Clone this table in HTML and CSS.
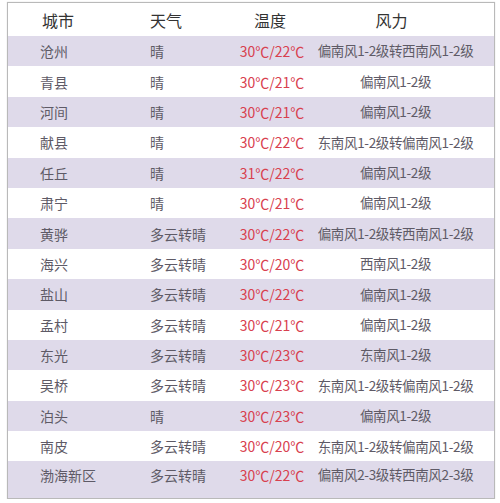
FILE: index.html
```html
<!DOCTYPE html>
<html lang="zh">
<head>
<meta charset="utf-8">
<link rel="stylesheet" href="styles.css">
</head>
<body>
<div class="page">
  <div class="table">
    <div class="row head">
      <div class="c1">城市</div><div class="c2">天气</div><div class="c3">温度</div><div class="c4">风力</div>
    </div>
    <div class="row alt"><div class="c1">沧州</div><div class="c2">晴</div><div class="c3 t">30℃/22℃</div><div class="c4">偏南风1-2级转西南风1-2级</div></div>
    <div class="row"><div class="c1">青县</div><div class="c2">晴</div><div class="c3 t">30℃/21℃</div><div class="c4">偏南风1-2级</div></div>
    <div class="row alt"><div class="c1">河间</div><div class="c2">晴</div><div class="c3 t">30℃/21℃</div><div class="c4">偏南风1-2级</div></div>
    <div class="row"><div class="c1">献县</div><div class="c2">晴</div><div class="c3 t">30℃/22℃</div><div class="c4">东南风1-2级转偏南风1-2级</div></div>
    <div class="row alt"><div class="c1">任丘</div><div class="c2">晴</div><div class="c3 t">31℃/22℃</div><div class="c4">偏南风1-2级</div></div>
    <div class="row"><div class="c1">肃宁</div><div class="c2">晴</div><div class="c3 t">30℃/21℃</div><div class="c4">偏南风1-2级</div></div>
    <div class="row alt"><div class="c1">黄骅</div><div class="c2">多云转晴</div><div class="c3 t">30℃/22℃</div><div class="c4">偏南风1-2级转西南风1-2级</div></div>
    <div class="row"><div class="c1">海兴</div><div class="c2">多云转晴</div><div class="c3 t">30℃/20℃</div><div class="c4">西南风1-2级</div></div>
    <div class="row alt"><div class="c1">盐山</div><div class="c2">多云转晴</div><div class="c3 t">30℃/22℃</div><div class="c4">偏南风1-2级</div></div>
    <div class="row"><div class="c1">孟村</div><div class="c2">多云转晴</div><div class="c3 t">30℃/21℃</div><div class="c4">偏南风1-2级</div></div>
    <div class="row alt"><div class="c1">东光</div><div class="c2">多云转晴</div><div class="c3 t">30℃/23℃</div><div class="c4">东南风1-2级</div></div>
    <div class="row"><div class="c1">吴桥</div><div class="c2">多云转晴</div><div class="c3 t">30℃/23℃</div><div class="c4">东南风1-2级转偏南风1-2级</div></div>
    <div class="row alt"><div class="c1">泊头</div><div class="c2">晴</div><div class="c3 t">30℃/23℃</div><div class="c4">偏南风1-2级</div></div>
    <div class="row"><div class="c1">南皮</div><div class="c2">多云转晴</div><div class="c3 t">30℃/20℃</div><div class="c4">东南风1-2级转偏南风1-2级</div></div>
    <div class="row alt last"><div class="c1">渤海新区</div><div class="c2">多云转晴</div><div class="c3 t">30℃/22℃</div><div class="c4">偏南风2-3级转西南风2-3级</div></div>
  </div>
</div>
</body>
</html>
```

FILE: styles.css
```css
html, body {
  margin: 0;
  padding: 0;
  background: #ffffff;
}
body {
  font-family: "Noto Sans CJK SC", "Noto Sans", sans-serif;
  color: #5e5a66;
}
.page {
  padding: 2px 0 0 7px;
}
.table {
  width: 488px;
  height: 497px;
  box-sizing: border-box;
  border: 1px solid #b9b9b9;
  box-shadow: 0 0 1px #d0d0d0;
  display: flex;
  flex-direction: column;
}
.row {
  display: grid;
  grid-template-columns: 112px 110px 84px 163px 17px;
  align-items: center;
  height: 30.4px;
  font-size: 14px;
  line-height: 1;
}
.row.head {
  height: 33px;
  font-size: 16px;
  color: #333333;
}
.row.alt {
  background: #dfdaea;
}
.row.last {
  flex: 1;
  align-items: start;
  padding-top: 7px;
}
.c1 { padding-left: 32px; }
.c2 { padding-left: 30px; }
.c3 { text-align: center; }
.c4 {
  text-align: center;
  white-space: nowrap;
  font-size: 13.5px;
  letter-spacing: -0.35px;
}
.head .c1 { padding-left: 34px; }
.head .c3 { padding-right: 4px; }
.head .c4 { padding-right: 8px; font-size: 16px; letter-spacing: 0; }
.t {
  color: #d8404e;
}
```
